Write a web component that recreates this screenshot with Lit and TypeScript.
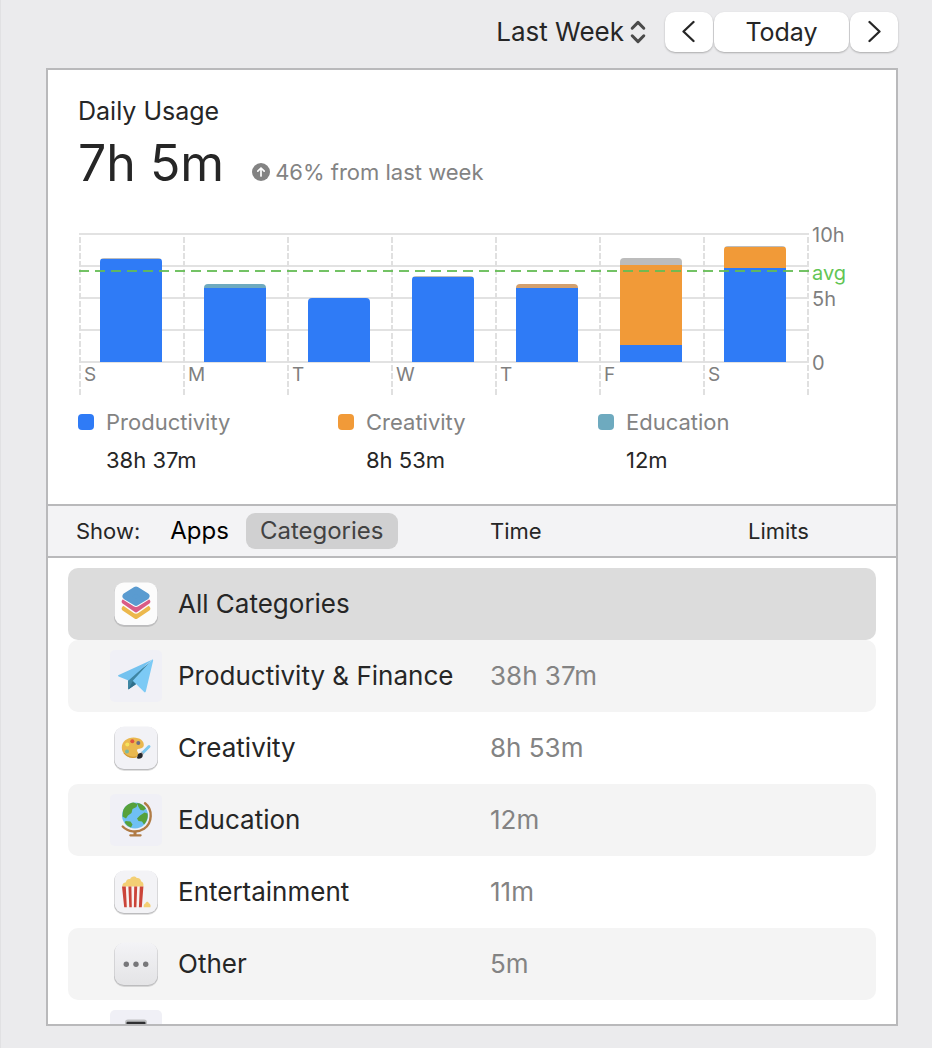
import { LitElement, html, svg, css, nothing } from "lit";
import { customElement, state } from "lit/decorators.js";
import { classMap } from "lit/directives/class-map.js";
import { styleMap } from "lit/directives/style-map.js";

type Kind = "productivity" | "creativity" | "education" | "other" | "mixed";

interface Segment {
  kind: Kind;
  hours: number;
}

interface Day {
  label: string;
  segments: Segment[];
}

interface Category {
  name?: string;
  time?: string;
  icon: string;
}

const MAX_HOURS = 10;

const DAYS: Day[] = [
  { label: "S", segments: [{ kind: "other", hours: 0.08 }, { kind: "productivity", hours: 8.02 }] },
  { label: "M", segments: [{ kind: "education", hours: 0.32 }, { kind: "productivity", hours: 5.75 }] },
  { label: "T", segments: [{ kind: "productivity", hours: 5.02 }] },
  { label: "W", segments: [{ kind: "other", hours: 0.08 }, { kind: "productivity", hours: 6.62 }] },
  { label: "T", segments: [{ kind: "mixed", hours: 0.28 }, { kind: "productivity", hours: 5.8 }] },
  {
    label: "F",
    segments: [
      { kind: "other", hours: 0.55 },
      { kind: "creativity", hours: 6.25 },
      { kind: "productivity", hours: 1.33 },
    ],
  },
  {
    label: "S",
    segments: [
      { kind: "other", hours: 0.08 },
      { kind: "creativity", hours: 1.6 },
      { kind: "productivity", hours: 7.35 },
    ],
  },
];

const LEGEND: { name: string; time: string; kind: Kind }[] = [
  { name: "Productivity", time: "38h 37m", kind: "productivity" },
  { name: "Creativity", time: "8h 53m", kind: "creativity" },
  { name: "Education", time: "12m", kind: "education" },
];

const CATEGORIES: Category[] = [
  { name: "All Categories", icon: "stack" },
  { name: "Productivity & Finance", time: "38h 37m", icon: "plane" },
  { name: "Creativity", time: "8h 53m", icon: "palette" },
  { name: "Education", time: "12m", icon: "globe" },
  { name: "Entertainment", time: "11m", icon: "popcorn" },
  { name: "Other", time: "5m", icon: "dots" },
  { icon: "device" },
];

const raisedTile = (fill: string) => svg`
  <rect x="4" y="6" width="44" height="43" rx="10" fill="#000" opacity=".12"/>
  <rect x="4" y="5" width="44" height="43" rx="10" fill="#bcbcbe"/>
  <rect x="4.5" y="4.5" width="43" height="42.5" rx="9.5" fill=${fill}/>`;

const flatTile = svg`<rect width="52" height="52" rx="5" fill="#f0f0f6"/>`;

const ICONS: Record<string, unknown> = {
  stack: svg`
    ${raisedTile("#fcfcfc")}
    <path d="M14.500 30.500 26 38.300 37.500 30.500" fill="none" stroke="#ecb84c" stroke-width="5.500" stroke-linecap="round" stroke-linejoin="round"/>
    <path d="M14.500 23.600 26 31.600 37.500 23.600" fill="none" stroke="#fcfcfc" stroke-width="8" stroke-linecap="round" stroke-linejoin="round"/>
    <path d="M14.500 23.600 26 31.600 37.500 23.600" fill="none" stroke="#da5c86" stroke-width="5.500" stroke-linecap="round" stroke-linejoin="round"/>
    <path d="M16 18.200 26 12 36 18.200 26 24.400Z" fill="#fcfcfc" stroke="#fcfcfc" stroke-width="9" stroke-linejoin="round"/>
    <path d="M16 18.200 26 12 36 18.200 26 24.400Z" fill="#5a9bd0" stroke="#5a9bd0" stroke-width="7" stroke-linejoin="round"/>`,
  plane: svg`
    ${flatTile}
    <path d="M18 28.500 42 11 26 34 18 39.500Z" fill="#3f86a3"/>
    <path d="M18.400 39.600 22.600 31.500 26 34.200Z" fill="#2f6f8b"/>
    <path d="M8.600 26.400c-.8-.4-.7-1 .1-1.300L42 9.700 18.500 30.500Z" fill="#74c2ef"/>
    <path d="M42 9.700c.9-.3 1.300.2 1.100 1L35.800 41.600c-.3.900-1 1-1.600.4L22.800 30.800Z" fill="#7ccaf5"/>`,
  palette: svg`
    ${raisedTile("#f2f2f6")}
    <path d="M23.500 15.500c6.500 0 10.800 3.600 10.300 7.800-.4 2.900-3 3.300-5 3.500-2.200.3-2 2-1 3.500 1.200 2 .8 4.600-2.700 5.400-6.200 1.200-13.300-3.300-13.300-10 0-6 5.200-10.200 11.700-10.200Z" fill="#eab84f"/>
    <path d="M14 31c3 3.800 8.500 5.400 12.600 3.600" fill="none" stroke="#cf9a38" stroke-width="1.200"/>
    <circle cx="17.300" cy="22.500" r="2" fill="#f6e35c"/>
    <circle cx="22.300" cy="19.300" r="2" fill="#e0533f"/>
    <circle cx="28.300" cy="21" r="2" fill="#6d6e86"/>
    <circle cx="17" cy="29.500" r="2" fill="#79b9a4"/>
    <path d="M39 24.500 32.500 31" stroke="#7cc8ef" stroke-width="3" stroke-linecap="round"/>
    <path d="M32.800 30.600 31 32.500" stroke="#a8adb3" stroke-width="3"/>
    <path d="M31.600 31.300c1.600 1.200 1.500 3.600-.2 4.600-1.500 1-3.500.9-4.800.2.900-.6.700-1.800 1.100-3 .5-1.700 2.500-2.700 3.900-1.800Z" fill="#26282c"/>`,
  globe: svg`
    ${flatTile}
    <circle cx="25" cy="21.500" r="13" fill="#6fc0f3"/>
    <path d="M13 17c1.500-4.500 5.500-8 10.500-8.500l4 1.500-1 3-4 2-1 4-3.500 2.500-2 3-3.500-2Z" fill="#57a13b"/>
    <path d="M27 9c4 .4 7 2.600 9 5.500l-2.500 2-3-.5-2-3Z" fill="#57a13b"/>
    <path d="M30 21.500l4.500-3 3 1c.8 4-.8 8.500-3.500 11l-2-3-3.500-.5-1.500-2.500Z" fill="#57a13b"/>
    <path d="M15.500 27l5 .5 2 3-1.500 3c-3-.9-5-3-6.200-5Z" fill="#57a13b"/>
    <path d="M35 9.300C43 15.500 42.500 29 34 34.800C27 39.300 18 38 12.700 32.500" fill="none" stroke="#b07b45" stroke-width="2.400" stroke-linecap="round"/>
    <path d="M25 37.500V41" stroke="#b07b45" stroke-width="3"/>
    <path d="M20.300 41.300H30.600" stroke="#b07b45" stroke-width="2.200" stroke-linecap="round"/>`,
  popcorn: svg`
    ${raisedTile("#f3f3f6")}
    <path d="M12.500 21c-.6-3 1.400-4.600 3.400-4.800.4-2.600 2.600-3.400 4.200-3 .8-3 5-3.600 6.600-1.200 2.400-.4 4.300 1 4.300 3.200 2.200.6 3 3 2.200 5.800Z" fill="#f3cf74"/>
    <path d="M12 20.500H33.400L31.800 41.300H14.200Z" fill="#f8f3f1"/>
    <path d="M12 20.500h3.800l1 20.800h-2.600ZM18.400 20.500h3l.4 20.800h-2.500ZM24.200 20.500h3l-.8 20.800h-2.500ZM29.800 20.500h3.600l-1.600 20.800h-2.900Z" fill="#cb4439"/>
    <path d="M33.800 41.300c-.6-2.400.8-3.600 1.800-4 .4-2 2.800-2 3.200 0 1.400.4 2.200 2 1.600 4Z" fill="#f3cf74"/>`,
  dots: svg`
    <defs>
      <linearGradient id="tile" x1="0" y1="0" x2="0" y2="1">
        <stop offset="0" stop-color="#f3f3f6"/>
        <stop offset="1" stop-color="#e4e4e6"/>
      </linearGradient>
    </defs>
    ${raisedTile("url(#tile)")}
    <g fill="#77777a">
      <circle cx="16.300" cy="26.300" r="2.700"/>
      <circle cx="26" cy="26.300" r="2.700"/>
      <circle cx="35.700" cy="26.300" r="2.700"/>
    </g>`,
  device: svg`
    ${flatTile}
    <rect x="15" y="9.500" width="22" height="33" rx="3" fill="#bfc0c2"/>
    <rect x="16.500" y="11.700" width="19" height="20" rx="1" fill="#2f2f31"/>`,
};

@customElement("usage-chart")
class UsageChart extends LitElement {
  static styles = css`
    :host {
      display: block;
    }
    .chart {
      display: grid;
      grid-template-columns: 1fr 50px;
      margin: 0 -1px 0 1px;
    }
    .plot {
      position: relative;
      display: grid;
      grid-template-columns: repeat(7, 1fr);
      height: 162px;
      padding-right: 2px;
      background:
        repeating-linear-gradient(to bottom, #e2e2e2 0 2px, transparent 2px 32px) 0 0 / 100% 130px no-repeat,
        repeating-linear-gradient(to bottom, transparent 0 2px, #e0e0e0 2px 8px) 100% 2px / 2px 160px no-repeat;
    }
    .day {
      display: grid;
      grid-template-rows: 129px 1fr;
      background: repeating-linear-gradient(to bottom, transparent 0 2px, #e0e0e0 2px 8px) 0 2px / 2px 160px no-repeat;
    }
    .bar-area {
      display: flex;
      align-items: flex-end;
      padding: 1px 21px 0;
    }
    .bar {
      display: flex;
      flex-direction: column;
      width: 100%;
      border-radius: 4px 4px 0 0;
      overflow: hidden;
    }
    .productivity {
      background: #2f7bf6;
    }
    .creativity {
      background: #f19a38;
    }
    .education {
      background: #6eaabf;
    }
    .other {
      background: #bcbcbc;
    }
    .mixed {
      background: #d3a06e;
    }
    .label {
      padding-left: 5px;
      font-size: 19px;
      line-height: 26px;
      color: #7f7f7f;
    }
    .average {
      position: absolute;
      inset: 37px 0 auto 0;
      height: 2px;
      background: repeating-linear-gradient(to right, rgba(100, 188, 84, 0.9) 0 10px, transparent 10px 16px);
    }
    .axis {
      display: grid;
      grid-template-rows: 38px 26px 64px;
      padding-left: 3px;
      margin-top: -11px;
      height: 152px;
      font-size: 20px;
      line-height: 26px;
      color: #7f7f7f;
    }
    .avg {
      color: #62c554;
    }
  `;

  private renderBar(segments: Segment[]) {
    const total = segments.reduce((sum, s) => sum + s.hours, 0);
    return html`
      <div class="bar" style=${styleMap({ height: `${(total / MAX_HOURS) * 100}%` })}>
        ${segments.map(
          (s) => html`<div class=${s.kind} style=${styleMap({ height: `${(s.hours / total) * 100}%` })}></div>`
        )}
      </div>
    `;
  }

  render() {
    return html`
      <div class="chart">
        <div class="plot">
          ${DAYS.map(
            (day) => html`
              <div class="day">
                <div class="bar-area">${this.renderBar(day.segments)}</div>
                <div class="label">${day.label}</div>
              </div>
            `
          )}
          <div class="average"></div>
        </div>
        <div class="axis">
          <span>10h</span>
          <span class="avg">avg</span>
          <span>5h</span>
          <span>0</span>
        </div>
      </div>
    `;
  }
}

@customElement("app-root")
class AppRoot extends LitElement {
  @state() private view = "Categories";
  @state() private selected = 0;

  static styles = css`
    :host {
      display: flex;
      flex-direction: column;
      box-sizing: border-box;
      height: 100vh;
      padding: 0 34px 22px 45px;
      border-left: 1px solid #e1e1e3;
      background: #ebebed;
      color: #262626;
      font-family: Inter, "Liberation Sans", sans-serif;
      font-size: 26px;
      line-height: 30px;
    }
    button,
    select {
      margin: 0;
      padding: 0;
      border: 0;
      background: none;
      color: inherit;
      font: inherit;
    }
    .toolbar {
      display: flex;
      justify-content: flex-end;
      align-items: center;
      gap: 19px;
      height: 64px;
      padding-bottom: 4px;
      flex: none;
    }
    .period {
      display: flex;
      align-items: center;
      gap: 6px;
    }
    .period select {
      appearance: none;
      field-sizing: content;
    }
    .nav {
      display: flex;
      gap: 1px;
    }
    .nav button {
      display: grid;
      place-items: center;
      width: 48px;
      height: 40px;
      border-radius: 10px;
      background: #fff;
      box-shadow: 0 1px 2px rgba(0, 0, 0, 0.28);
    }
    .nav .today {
      width: 135px;
      font-size: 25px;
    }
    svg {
      display: block;
    }
    .panel {
      display: flex;
      flex-direction: column;
      flex: 1;
      min-height: 0;
      border: 2px solid #b9b9bb;
      background: #fff;
    }
    .summary {
      flex: none;
      padding: 26px 38px 25px 30px;
    }
    h1 {
      margin: 0;
      font-size: 25px;
      line-height: 30px;
      font-weight: 400;
    }
    .total-row {
      display: flex;
      align-items: baseline;
      gap: 28px;
      margin-bottom: 33px;
    }
    .total {
      font-size: 50px;
      line-height: 74px;
    }
    .change {
      display: flex;
      align-items: center;
      gap: 5px;
      font-size: 22px;
      color: #838383;
    }
    .legend {
      display: grid;
      grid-template-columns: repeat(3, 1fr);
      margin: 8px 0 0;
    }
    .legend-item {
      display: grid;
      grid-template-columns: 16px 1fr;
      align-items: center;
      column-gap: 12px;
      font-size: 22px;
      line-height: 38px;
    }
    .swatch {
      width: 16px;
      height: 16px;
      border-radius: 4px;
    }
    .productivity {
      background: #2f7bf6;
    }
    .creativity {
      background: #f19a38;
    }
    .education {
      background: #6eaabf;
    }
    dt {
      color: #838383;
    }
    dd {
      grid-column: 2;
      margin: 0;
    }
    .list {
      display: flex;
      flex-direction: column;
      flex: 1;
      min-height: 0;
    }
    thead {
      display: block;
      flex: none;
      border: solid #b9b9bb;
      border-width: 2px 0;
      background: #f3f3f5;
    }
    tr {
      display: grid;
      grid-template-columns: 422fr 258fr 128fr;
      align-items: center;
    }
    thead tr {
      height: 50px;
      padding: 0 20px;
      font-size: 22px;
    }
    th,
    td {
      padding: 0;
      text-align: left;
      font-weight: 400;
    }
    .show {
      display: flex;
      align-items: center;
      gap: 16px;
      padding-left: 8px;
    }
    .switch {
      display: flex;
      gap: 3px;
    }
    .switch button {
      height: 36px;
      padding: 0 14px;
      border-radius: 9px;
      font-size: 24px;
      color: #000;
    }
    .switch .on {
      background: #d0d0d1;
      color: #424242;
    }
    tbody {
      display: block;
      flex: 1;
      min-height: 0;
      overflow: hidden;
      padding: 10px 20px 0;
    }
    tbody tr {
      height: 72px;
      border-radius: 10px;
    }
    tbody tr:nth-child(even) {
      background: #f4f4f4;
    }
    tbody tr.selected {
      background: #dcdcdc;
    }
    .name {
      display: flex;
      align-items: center;
      gap: 16px;
      padding-left: 42px;
      white-space: nowrap;
    }
    .time {
      color: #838383;
    }
  `;

  render() {
    return html`
      <div class="toolbar">
        <label class="period">
          <select aria-label="Period">
            <option>Last Week</option>
          </select>
          <svg width="16" height="24" viewBox="0 0 16 24" fill="none" stroke="#4a4a4a" stroke-width="3" stroke-linecap="round" stroke-linejoin="round">
            <path d="M2.200 8.200 8 2.400l5.800 5.800M2.200 15.800 8 21.600l5.800-5.800" />
          </svg>
        </label>
        <div class="nav">
          <button aria-label="Previous">
            <svg width="14" height="24" viewBox="0 0 14 24" fill="none" stroke="#262626" stroke-width="2.300" stroke-linecap="round" stroke-linejoin="round">
              <path d="M11.500 2 1.500 11.500l10 9.500" />
            </svg>
          </button>
          <button class="today">Today</button>
          <button aria-label="Next">
            <svg width="14" height="24" viewBox="0 0 14 24" fill="none" stroke="#262626" stroke-width="2.300" stroke-linecap="round" stroke-linejoin="round">
              <path d="M2.500 2l10 9.500-10 9.500" />
            </svg>
          </button>
        </div>
      </div>
      <main class="panel">
        <section class="summary">
          <h1>Daily Usage</h1>
          <div class="total-row">
            <span class="total">7h 5m</span>
            <span class="change">
              <svg width="18" height="18" viewBox="0 0 18 18">
                <circle cx="9" cy="9" r="9" fill="#838383" />
                <path d="M9 13V5.200M5.800 8.200 9 5l3.200 3.200" fill="none" stroke="#fff" stroke-width="1.700" stroke-linecap="round" stroke-linejoin="round" />
              </svg>
              46% from last week
            </span>
          </div>
          <usage-chart></usage-chart>
          <dl class="legend">
            ${LEGEND.map(
              (item) => html`
                <div class="legend-item">
                  <span class=${classMap({ swatch: true, [item.kind]: true })}></span>
                  <dt>${item.name}</dt>
                  <dd>${item.time}</dd>
                </div>
              `
            )}
          </dl>
        </section>
        <table class="list">
          <thead>
            <tr>
              <th>
                <div class="show">
                  <span>Show:</span>
                  <div class="switch">
                    ${["Apps", "Categories"].map(
                      (name) => html`<button
                        class=${classMap({ on: this.view === name })}
                        aria-pressed=${this.view === name}
                        @click=${() => (this.view = name)}
                      >${name}</button>`
                    )}
                  </div>
                </div>
              </th>
              <th>Time</th>
              <th>Limits</th>
            </tr>
          </thead>
          <tbody>
            ${CATEGORIES.map(
              (c, i) => html`
                <tr class=${classMap({ selected: this.selected === i })} @click=${() => (this.selected = i)}>
                  <td>
                    <div class="name">
                      <svg width="52" height="52" viewBox="0 0 52 52">${ICONS[c.icon]}</svg>
                      ${c.name ? html`<span>${c.name}</span>` : nothing}
                    </div>
                  </td>
                  <td class="time">${c.time ?? nothing}</td>
                  <td></td>
                </tr>
              `
            )}
          </tbody>
        </table>
      </main>
    `;
  }
}
